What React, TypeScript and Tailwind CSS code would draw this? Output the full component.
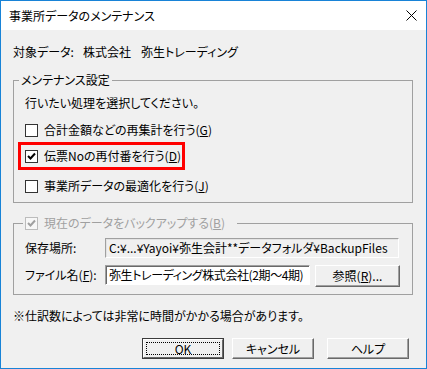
import type { ReactNode } from "react";

// classic win32 dialog: 事業所データのメンテナンス

function CheckBox({ checked, disabled }: { checked?: boolean; disabled?: boolean }) {
  return (
    <span
      className={
        disabled
          ? "w-[13px] h-[13px] shrink-0 border border-[#bcbcbc] bg-[#f7f7f7] flex items-center justify-center"
          : "w-[13px] h-[13px] shrink-0 border border-[#333333] bg-white flex items-center justify-center"
      }
    >
      {checked && (
        <svg width="11" height="11" viewBox="0 0 11 11">
          <polyline
            points="2,5 4.5,7.5 9,2.5"
            fill="none"
            stroke={disabled ? "#a0a0a0" : "#000"}
            strokeWidth="2"
          />
        </svg>
      )}
    </span>
  );
}

// label with underlined access key, e.g. (G)
function Key({ text, k }: { text: string; k: string }) {
  return (
    <span>
      {text}(<span className="underline">{k}</span>)
    </span>
  );
}

function Button({ children, primary, className }: { children: ReactNode; primary?: boolean; className?: string }) {
  if (primary) {
    return (
      <div className={"h-[21px] w-[82px] border border-[#3c3c3c] bg-[#f0f0f0] " + (className ?? "")}>
        <div className="h-full w-full border-t border-l border-t-white border-l-white border-b border-r border-b-[#696969] border-r-[#696969] p-[2px]">
          <div className="h-full w-full border border-dotted border-black flex items-center justify-center">
            {children}
          </div>
        </div>
      </div>
    );
  }
  return (
    <div
      className={
        "h-[21px] w-[82px] border-t border-l border-t-white border-l-white border-b border-r border-b-[#696969] border-r-[#696969] bg-[#f0f0f0] shadow-[inset_-1px_-1px_0_#a0a0a0] flex items-center justify-center " +
        (className ?? "")
      }
    >
      {children}
    </div>
  );
}

export default function App() {
  return (
    <div className="w-[427px] h-[369px] border border-[#1883d7] bg-[#f0f0f0] flex flex-col text-[12px] leading-[16px] text-black font-['Noto_Sans_CJK_JP','Noto_Sans',sans-serif] [font-feature-settings:'palt']">
      {/* title bar */}
      <div className="h-[29px] shrink-0 bg-white flex items-center justify-between pl-[8px] pr-[9px]">
        <span>事業所データのメンテナンス</span>
        <svg width="11" height="11" viewBox="0 0 11 11">
          <path d="M0.5 0.5L10.5 10.5M10.5 0.5L0.5 10.5" stroke="#000" strokeWidth="1" />
        </svg>
      </div>

      <div className="flex flex-col px-[12px]">
        <div className="mt-[14px] h-[16px] flex">
          <span className="w-[70px]">対象データ:</span>
          <span>株式会社</span>
          <span className="ml-[10px]">弥生トレーディング</span>
        </div>

        {/* メンテナンス設定 */}
        <fieldset className="mt-[12px] w-[400px] border border-[#a0a0a0]">
          <legend className="ml-[5px] px-[2px] h-[16px] leading-[16px]">メンテナンス設定</legend>
          <div className="h-[30px] pl-[11px] flex items-center">行いたい処理を選択してください。</div>
          <div className="h-[24px] pl-[11px] flex items-center gap-[6px]">
            <CheckBox />
            <Key text="合計金額などの再集計を行う" k="G" />
          </div>
          <div className="h-[28px] ml-[4px] w-[167px] border-[3px] border-[#ff0000] pl-[4px] flex items-center gap-[6px]">
            <CheckBox checked />
            <Key text="伝票Noの再付番を行う" k="D" />
          </div>
          <div className="h-[32px] pl-[11px] flex items-center gap-[6px]">
            <CheckBox />
            <Key text="事業所データの最適化を行う" k="J" />
          </div>
        </fieldset>

        {/* バックアップ */}
        <fieldset className="mt-[12px] w-[400px] border border-[#a0a0a0] pb-[7px]">
          <legend className="ml-[9px] pl-[2px] pr-[12px] h-[16px] flex items-center gap-[6px] text-[#a0a0a0]">
            <CheckBox checked disabled />
            <Key text="現在のデータをバックアップする" k="B" />
          </legend>
          <div className="mt-[7px] h-[20px] pl-[11px] flex items-center">
            <span className="w-[80px]">保存場所:</span>
            <div className="w-[294px] h-[20px] border border-t-[#a0a0a0] border-l-[#a0a0a0] border-b-white border-r-white bg-[#f0f0f0] shadow-[inset_1px_1px_0_#e3e3e3] pl-[3px] flex items-center whitespace-nowrap overflow-hidden">
              C:¥...¥Yayoi¥弥生会計**データフォルダ¥BackupFiles
            </div>
          </div>
          <div className="mt-[7px] h-[22px] pl-[11px] flex items-start">
            <span className="w-[80px] h-[20px] flex items-center">
              <Key text="ファイル名" k="F" />:
            </span>
            <div className="w-[205px] h-[20px] border border-t-[#a0a0a0] border-l-[#a0a0a0] border-b-white border-r-white bg-white shadow-[inset_1px_1px_0_#696969] pl-[3px] flex items-center whitespace-nowrap overflow-hidden tracking-[-0.4px]">
              弥生トレーディング株式会社(2期〜4期)
            </div>
            <Button className="ml-[5px] w-[85px] h-[22px]">
              <span>
                参照(<span className="underline">R</span>)...
              </span>
            </Button>
          </div>
        </fieldset>

        <div className="mt-[13px] h-[16px]">※仕訳数によっては非常に時間がかかる場合があります。</div>

        <div className="mt-[14px] flex justify-end pr-[5px]">
          <Button primary>OK</Button>
          <Button className="ml-[8px]">キャンセル</Button>
          <Button className="ml-[13px]">ヘルプ</Button>
        </div>
      </div>
    </div>
  );
}
